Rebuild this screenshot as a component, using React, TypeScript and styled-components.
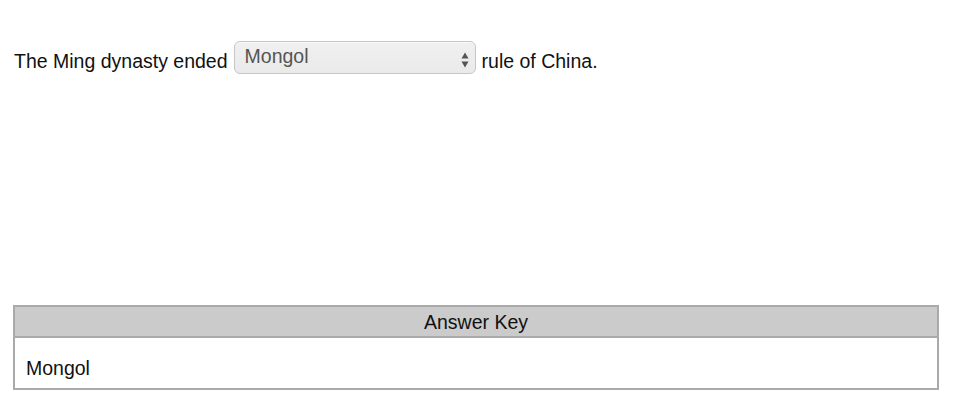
import React from "react";
import styled, { createGlobalStyle } from "styled-components";

const Global = createGlobalStyle`
  html, body { margin: 0; padding: 0; background: #fff; }
  body { font-family: "Liberation Sans", Arial, sans-serif; color: #111; }
`;

const Page = styled.div`
  padding: 41px 19px 0 13px;
  display: flex;
  flex-direction: column;
`;

const Sentence = styled.div`
  display: flex;
  align-items: flex-start;
  font-size: 19.5px;
  line-height: 22px;
  padding-left: 1px;
  gap: 6px;
  height: 33px;
`;

const Words = styled.span`
  margin-top: 9px;
`;

const SelectBox = styled.div`
  box-sizing: border-box;
  width: 242px;
  height: 33px;
  border: 1px solid #c6c6c6;
  border-radius: 6px;
  background: linear-gradient(#f0f0f0, #eaeaea);
  display: flex;
  align-items: flex-start;
  justify-content: space-between;
  padding: 3px 6px 0 10px;
  color: #555;
  font-size: 19.5px;
  line-height: 22px;
  box-shadow: inset 0 1px 0 #fafafa;
`;

const Arrows = styled.svg`
  width: 8px;
  height: 16px;
  margin-top: 7px;
`;

const KeyTable = styled.div`
  margin-top: 231px;
  border: 2px solid #aaa;
  display: flex;
  flex-direction: column;
`;

const KeyHeader = styled.div`
  background: #cbcbcb;
  border-bottom: 2px solid #aaa;
  height: 31px;
  display: flex;
  align-items: center;
  justify-content: center;
  padding-top: 2px;
  box-sizing: border-box;
  font-size: 19.5px;
  color: #111;
`;

const KeyBody = styled.div`
  height: 50px;
  box-sizing: border-box;
  display: flex;
  align-items: center;
  padding: 10px 0 0 11px;
  font-size: 19.5px;
  color: #111;
`;

export default function App() {
  return (
    <>
      <Global />
      <Page>
        <Sentence>
          <Words>The Ming dynasty ended</Words>
          <SelectBox>
            <span>Mongol</span>
            <Arrows viewBox="0 0 8 16">
              <path d="M4 0.5 L7.5 6.5 L0.5 6.5 Z" fill="#555" />
              <path d="M4 15.5 L7.5 9.5 L0.5 9.5 Z" fill="#555" />
            </Arrows>
          </SelectBox>
          <Words>rule of China.</Words>
        </Sentence>
        <KeyTable>
          <KeyHeader>Answer Key</KeyHeader>
          <KeyBody>Mongol</KeyBody>
        </KeyTable>
      </Page>
    </>
  );
}
